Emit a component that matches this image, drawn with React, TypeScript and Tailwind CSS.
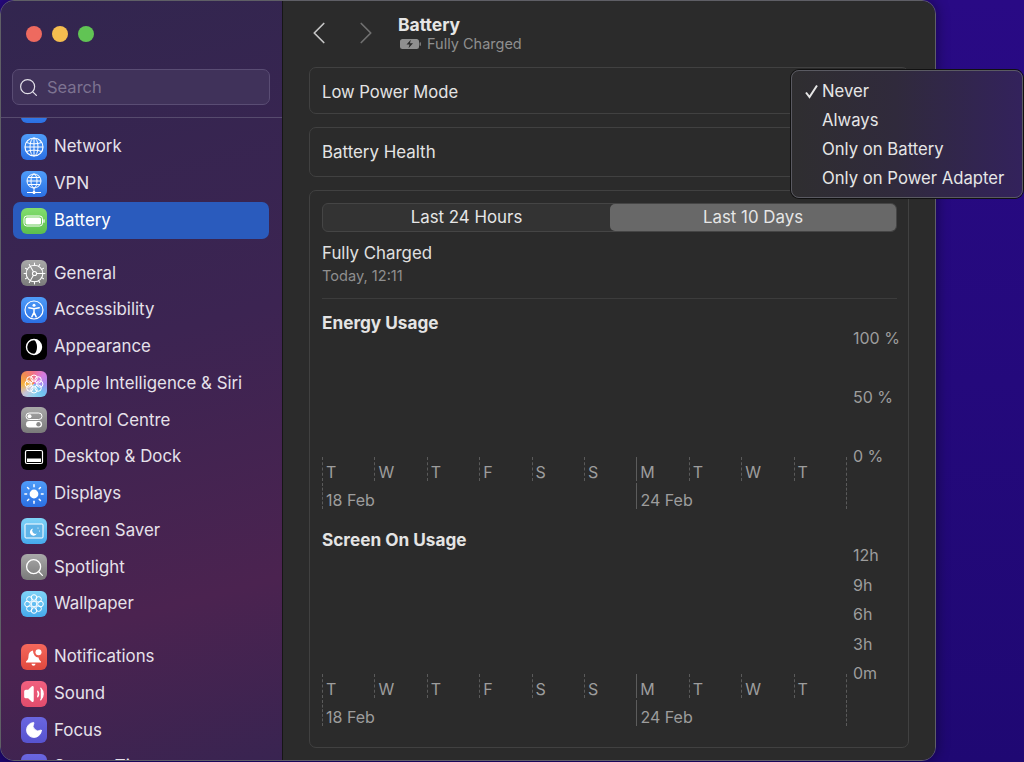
import type { ReactNode } from "react";
import { ChevronLeft, ChevronRight, Cog, Moon, Search, Sun, Volume2 } from "lucide-react";

const tileBlue = "bg-linear-to-b from-[#4f9cf9] to-[#2b6fe3]";
const tileGray = "bg-linear-to-b from-[#a9a9a9] to-[#7a7a7a]";
const tileSky = "bg-linear-to-b from-[#7fd3f7] to-[#45a9ec]";

function Tile({ className, children }: { className: string; children?: ReactNode }) {
  return (
    <div className={`w-[26px] h-[26px] shrink-0 rounded-[6px] flex items-center justify-center overflow-hidden ${className}`}>
      {children}
    </div>
  );
}

function Petals({ r, d, count }: { r: number; d: number; count: number }) {
  return (
    <>
      {Array.from({ length: count }).map((_, i) => {
        const a = (i / count) * Math.PI * 2;
        return <circle key={i} cx={13 + Math.cos(a) * d} cy={13 + Math.sin(a) * d} r={r} fill="none" stroke="white" strokeWidth="1" />;
      })}
    </>
  );
}

function Icon({ name }: { name: string }) {
  switch (name) {
    case "Wi-Fi":
      return <Tile className={tileBlue} />;
    case "Network":
      return (
        <Tile className={tileBlue}>
          <svg width="26" height="26" viewBox="0 0 26 26" fill="none" stroke="white" strokeWidth="1">
            <circle cx="13" cy="13" r="9" strokeWidth="1.2" />
            <ellipse cx="13" cy="13" rx="4" ry="9" />
            <path d="M4 13h18M13 4v18M5.500 8.500c4 1.800 11 1.800 15 0M5.500 17.500c4-1.800 11-1.800 15 0" />
          </svg>
        </Tile>
      );
    case "VPN":
      return (
        <Tile className={tileBlue}>
          <svg width="26" height="26" viewBox="0 0 26 26" fill="none" stroke="white" strokeWidth="1">
            <circle cx="13" cy="10" r="7" />
            <ellipse cx="13" cy="10" rx="3" ry="7" />
            <path d="M6 10h14M7 6.500h12M7 13.500h12M13 17v4M6 21.500h14" />
            <circle cx="13" cy="21.500" r="1.200" fill="white" />
          </svg>
        </Tile>
      );
    case "Battery":
      return (
        <Tile className="bg-linear-to-b from-[#82dd6e] to-[#5bbf4e]">
          <svg width="26" height="26" viewBox="0 0 26 26">
            <rect x="3" y="8" width="18.500" height="10" rx="2.800" fill="none" stroke="white" strokeWidth="1" />
            <rect x="4.500" y="9.500" width="15.500" height="7" rx="1.600" fill="white" />
            <rect x="22.400" y="11.200" width="1.200" height="3.600" rx="0.600" fill="white" />
          </svg>
        </Tile>
      );
    case "General":
      return (
        <Tile className={tileGray}>
          <Cog size={25} color="white" strokeWidth={1} />
        </Tile>
      );
    case "Accessibility":
      return (
        <Tile className={tileBlue}>
          <svg width="26" height="26" viewBox="0 0 26 26" fill="none" stroke="white">
            <circle cx="13" cy="13" r="9" strokeWidth="1.200" />
            <circle cx="13" cy="8.300" r="1.500" fill="white" stroke="none" />
            <path d="M7.800 10.800 13 11.800l5.200-1M13 11.800v3.600M13 15.400l-2.200 4.400M13 15.400l2.200 4.400" strokeWidth="1.500" strokeLinecap="round" />
          </svg>
        </Tile>
      );
    case "Appearance":
      return (
        <Tile className="bg-black">
          <svg width="26" height="26" viewBox="0 0 26 26">
            <circle cx="13" cy="13" r="7.500" fill="none" stroke="white" strokeWidth="1.400" />
            <path d="M13 5.500a7.500 7.500 0 0 1 0 15c2-2 3-4.500 3-7.500s-1-5.500-3-7.500z" fill="white" />
          </svg>
        </Tile>
      );
    case "Apple Intelligence & Siri":
      return (
        <Tile className="bg-[conic-gradient(from_0deg,#f0708f,#d77be0,#a58bf0,#6fc3f0,#8fd0ee,#c8c3d8,#f6b23e,#f08a52,#f0708f)]">
          <svg width="26" height="26" viewBox="0 0 26 26">
            <Petals r={3.200} d={5.800} count={8} />
          </svg>
        </Tile>
      );
    case "Control Centre":
      return (
        <Tile className={tileGray}>
          <svg width="26" height="26" viewBox="0 0 26 26">
            <rect x="5" y="6" width="16" height="6.500" rx="3.250" fill="none" stroke="white" strokeWidth="1" />
            <circle cx="8.500" cy="9.250" r="2" fill="white" />
            <rect x="5" y="14" width="16" height="6.500" rx="3.250" fill="white" />
            <circle cx="17.500" cy="17.250" r="2.200" fill="#8a8a8a" />
          </svg>
        </Tile>
      );
    case "Desktop & Dock":
      return (
        <Tile className="bg-black">
          <svg width="26" height="26" viewBox="0 0 26 26">
            <rect x="4.500" y="6.500" width="17" height="13" rx="1.500" fill="none" stroke="white" strokeWidth="1.200" />
            <rect x="6" y="14.500" width="14" height="3.500" fill="white" />
          </svg>
        </Tile>
      );
    case "Displays":
      return (
        <Tile className={tileBlue}>
          <Sun size={22} color="white" fill="white" strokeWidth={1.600} />
        </Tile>
      );
    case "Screen Saver":
      return (
        <Tile className={tileSky}>
          <svg width="26" height="26" viewBox="0 0 26 26">
            <rect x="4" y="6" width="18" height="14" rx="1" fill="#5fb4e8" stroke="white" strokeWidth="1" />
            <path d="M12 10.500a3.600 3.600 0 1 0 3.800 5 3.200 3.200 0 0 1-3.800-5z" fill="white" />
            <circle cx="17" cy="10" r="0.600" fill="white" />
            <circle cx="18.500" cy="13" r="0.600" fill="white" />
          </svg>
        </Tile>
      );
    case "Spotlight":
      return (
        <Tile className={tileGray}>
          <Search size={21} color="white" strokeWidth={1.500} />
        </Tile>
      );
    case "Wallpaper":
      return (
        <Tile className={tileSky}>
          <svg width="26" height="26" viewBox="0 0 26 26">
            <Petals r={2.800} d={6.500} count={8} />
            <circle cx="13" cy="13" r="2.800" fill="none" stroke="white" strokeWidth="1" />
          </svg>
        </Tile>
      );
    case "Notifications":
      return (
        <Tile className="bg-linear-to-b from-[#f5685c] to-[#e0483e]">
          <svg width="26" height="26" viewBox="0 0 26 26" fill="white">
            <path d="M12 6.500c-3 .4-4.500 2.800-4.500 5.500 0 3-1 4.300-2.500 5.500v1h15v-1c-1.300-1-2.200-2.200-2.400-4-3 .2-5.500-3.200-5.600-7z" />
            <circle cx="17.500" cy="8.200" r="3" />
            <path d="M10.500 19.800h4a2 2 0 0 1-4 0z" />
          </svg>
        </Tile>
      );
    case "Sound":
      return (
        <Tile className="bg-linear-to-b from-[#f0607f] to-[#e24c6c]">
          <Volume2 size={22} color="white" fill="white" strokeWidth={1.400} />
        </Tile>
      );
    case "Focus":
      return (
        <Tile className="bg-linear-to-b from-[#6a66e0] to-[#5753cf]">
          <Moon size={20} color="white" fill="white" strokeWidth={1} />
        </Tile>
      );
    default:
      return (
        <Tile className="bg-linear-to-b from-[#6a66e0] to-[#5753cf]">
          <div className="w-[10px] h-[14px] rounded-[2px] bg-white" />
        </Tile>
      );
  }
}

const groups = [
  ["Wi-Fi", "Network", "VPN", "Battery"],
  ["General", "Accessibility", "Appearance", "Apple Intelligence & Siri", "Control Centre", "Desktop & Dock", "Displays", "Screen Saver", "Spotlight", "Wallpaper"],
  ["Notifications", "Sound", "Focus", "Screen Time"],
];

function Sidebar() {
  return (
    <aside className="w-[282px] shrink-0 h-full flex flex-col border-r border-[#161616] bg-[linear-gradient(165deg,#32264f_0%,#3c2452_45%,#4b2350_78%,#392451_100%)]">
      <div className="flex gap-[10px] pl-[25px] pt-[25px]">
        <span className="w-[16px] h-[16px] rounded-full bg-[#ee6a5f]" />
        <span className="w-[16px] h-[16px] rounded-full bg-[#f5bd4f]" />
        <span className="w-[16px] h-[16px] rounded-full bg-[#61c454]" />
      </div>
      <div className="ml-[11px] mr-[12px] mt-[27px] h-[36px] rounded-[7px] border border-[#5a4d74] bg-[#40325a] flex items-center pl-[5px] gap-[8px]">
        <Search size={21} color="#e2dfe8" strokeWidth={1.400} />
        <span className="text-[16.500px] text-[#7d7391]">Search</span>
      </div>
      <div className="mt-[12px] h-px bg-[#574b6e]" />
      <div className="flex-1 overflow-hidden">
        <div className="-mt-[26px] flex flex-col gap-[16px]">
          {groups.map((g, i) => (
            <div key={i} className="flex flex-col">
              {g.map((name) => (
                <div
                  key={name}
                  className={`h-[36.750px] ml-[12px] mr-[13px] pl-[8px] rounded-[7px] flex items-center gap-[7px] text-[16.850px] ${
                    name === "Battery" ? "bg-[#2a5bbd] text-white" : "text-[#e6e1ea]"
                  }`}
                >
                  <Icon name={name} />
                  <span>{name}</span>
                </div>
              ))}
            </div>
          ))}
        </div>
      </div>
    </aside>
  );
}

const days = ["T", "W", "T", "F", "S", "S", "M", "T", "W", "T"];

function Chart({ title, ticks, gap }: { title: string; ticks: string[]; gap: string }) {
  return (
    <div className="flex">
      <div className="w-[531px] shrink-0">
        <div className="text-[17.200px] leading-[22px] font-bold text-[#e4e4e4]">{title}</div>
        <div className="mt-[123px] flex h-[24px]">
          {days.map((d, i) => (
            <div
              key={i}
              className={`w-[52.400px] shrink-0 border-l pl-[3px] flex items-end leading-[18px] ${
                d === "M" ? "border-solid border-[#5c5c5c]" : "border-dashed border-[#5a5a5a]"
              }`}
            >
              {d}
            </div>
          ))}
          <div className="border-l border-dashed border-[#5a5a5a]" />
        </div>
        <div className="mt-[2px] flex h-[26px]">
          <div className="w-[314.400px] shrink-0 border-l border-dashed border-[#5a5a5a] pl-[3px] flex items-end leading-[18px]">18 Feb</div>
          <div className="w-[209.600px] shrink-0 border-l border-solid border-[#5c5c5c] pl-[3px] flex items-end leading-[18px]">24 Feb</div>
          <div className="border-l border-dashed border-[#5a5a5a]" />
        </div>
      </div>
      <div className={`pt-[17px] flex flex-col whitespace-nowrap ${gap}`}>
        {ticks.map((t) => (
          <div key={t} className="leading-[18px]">{t}</div>
        ))}
      </div>
    </div>
  );
}

function Content() {
  return (
    <main className="flex-1 min-w-0 h-full pl-[26px] pr-[26px] bg-[#2b2b2b]">
      <header className="h-[66px] flex">
        <div className="flex items-start pt-[13px] -ml-[9px]">
          <ChevronLeft size={38} color="#c4c4c4" strokeWidth={1.100} />
          <ChevronRight size={38} color="#6f6f6f" strokeWidth={1.100} className="ml-[9px]" />
        </div>
        <div className="ml-[13px] pt-[13px]">
          <div className="text-[17.500px] leading-[22px] font-bold text-[#e6e6e6]">Battery</div>
          <div className="-mt-[1px] flex items-center gap-[6px] text-[14.500px] leading-[18px] text-[#8f8f8f]">
            <svg width="21" height="10" viewBox="0 0 21 10" className="ml-[2px]">
              <rect x="0" y="0" width="19" height="10" rx="2.500" fill="#8f8f8f" />
              <rect x="19.600" y="3.200" width="1.200" height="3.600" rx="0.600" fill="#8f8f8f" />
              <path d="M10.800 0.800 6.500 5.600h3l-1 3.700 4.500-5h-3z" fill="#2b2b2b" />
            </svg>
            <span>Fully Charged</span>
          </div>
        </div>
      </header>
      <section className="h-[47px] rounded-[7px] border border-[#414141] flex items-center pl-[12px] pt-[3px] text-[16.600px] text-[#e4e4e4]">Low Power Mode</section>
      <section className="mt-[13px] h-[50px] rounded-[7px] border border-[#414141] flex items-center pl-[12px] pt-[2px] text-[16.900px] text-[#e4e4e4]">Battery Health</section>
      <section className="mt-[13px] h-[558px] rounded-[7px] border border-[#414141] pl-[12px] pr-[11px] pt-[12px] text-[16px] text-[#9d9d9d]">
        <div className="h-[29px] flex rounded-[6px] border border-[#454545] bg-[#333333] text-[16.850px] text-[#e6e6e6]">
          <div className="flex-1 flex items-center justify-center">Last 24 Hours</div>
          <div className="w-[286px] flex items-center justify-center rounded-[5px] bg-[#686868]">Last 10 Days</div>
        </div>
        <div className="mt-[10px] text-[16.850px] leading-[22px] text-[#e0e0e0]">Fully Charged</div>
        <div className="mt-[3px] text-[14.600px] leading-[18px] text-[#8f8f8f]">Today, 12:11</div>
        <div className="mt-[13px] h-px bg-[#3c3c3c]" />
        <div className="mt-[13px]">
          <Chart title="Energy Usage" ticks={["100 %", "50 %", "0 %"]} gap="gap-[41px]" />
        </div>
        <div className="mt-[20px]">
          <Chart title="Screen On Usage" ticks={["12h", "9h", "6h", "3h", "0m"]} gap="gap-[11.500px]" />
        </div>
      </section>
    </main>
  );
}

const menuItems = ["Never", "Always", "Only on Battery", "Only on Power Adapter"];

export default function App() {
  return (
    <div className="relative w-[1024px] h-[762px] overflow-hidden bg-[linear-gradient(180deg,#290a85_0%,#1f0873_100%)] [font-family:Inter,sans-serif]">
      <div className="w-[936px] h-[761px] flex overflow-hidden rounded-[14px] border border-[#5f5f66] shadow-[0_0_14px_rgba(0,0,0,0.45)]">
        <Sidebar />
        <Content />
      </div>
      {/* Menu of Low Power Mode */}
      <div className="absolute left-[791px] top-[70px] w-[232px] h-[128px] rounded-[8px] border border-[#5a5a62] bg-[linear-gradient(90deg,#2f2e30_0%,#302a3c_45%,#33225c_100%)] shadow-[0_0_0_1px_#111] text-[16.700px] text-[#e6e6e6] py-[6px]">
        {menuItems.map((m, i) => (
          <div key={m} className="relative h-[29px] pl-[30px] flex items-center">
            {i === 0 && (
              <svg width="15" height="15" viewBox="0 0 15 15" fill="none" stroke="currentColor" strokeWidth="2" className="absolute left-[12px]">
                <path d="M2 8.500 5.500 13 13 1.500" />
              </svg>
            )}
            {m}
          </div>
        ))}
      </div>
    </div>
  );
}
